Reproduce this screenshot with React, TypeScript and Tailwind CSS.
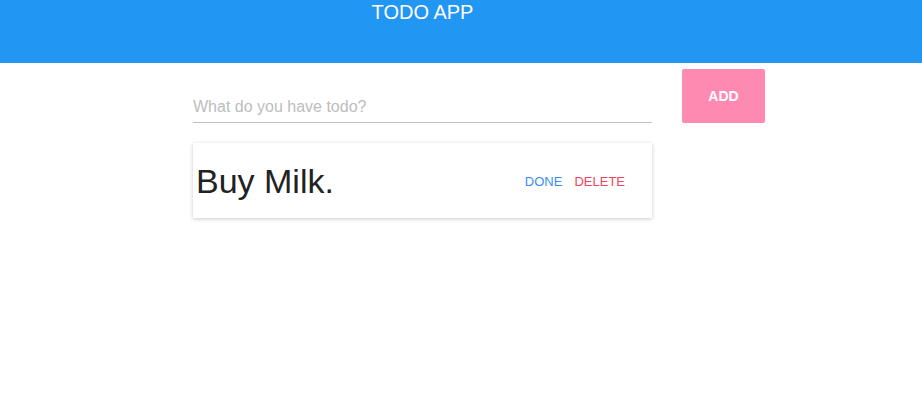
export default function App() {
  return (
    <div className="min-h-screen w-full bg-white font-['Liberation_Sans',Arial,sans-serif]">
      {/* Header */}
      <header className="h-[63px] w-full bg-[#2196f3]">
        <div className="ml-[193px] w-[459px] pt-[1px] text-center text-[20px] leading-[23px] text-white">
          TODO APP
        </div>
      </header>

      <main className="ml-[193px] flex flex-col">
        {/* Input row */}
        <div className="flex items-start gap-[30px] pt-[6px]">
          <div className="flex h-[54px] w-[459px] items-end border-b border-[#c2c2c2]">
            <input
              className="mb-[6px] w-full bg-transparent text-[16px] leading-[18px] text-[#333] outline-none placeholder:text-[#bdbdbd]"
              placeholder="What do you have todo?"
            />
          </div>
          <button className="h-[54px] w-[83px] rounded-[2px] bg-[#ff8ab1] text-[14px] font-bold text-white">
            ADD
          </button>
        </div>

        {/* Todo item */}
        <div className="mt-[20px] flex h-[75px] w-[459px] items-center justify-between bg-white shadow-[0_1px_4px_rgba(0,0,0,0.22)]">
          <span className="pl-[3px] pt-[1px] text-[34px] leading-[40px] text-[#222]">Buy Milk.</span>
          <div className="mr-[27px] mt-[3px] flex gap-[12px] text-[13px]">
            <button className="text-[#3a8ef2]">DONE</button>
            <button className="text-[#f4435a]">DELETE</button>
          </div>
        </div>
      </main>
    </div>
  );
}
